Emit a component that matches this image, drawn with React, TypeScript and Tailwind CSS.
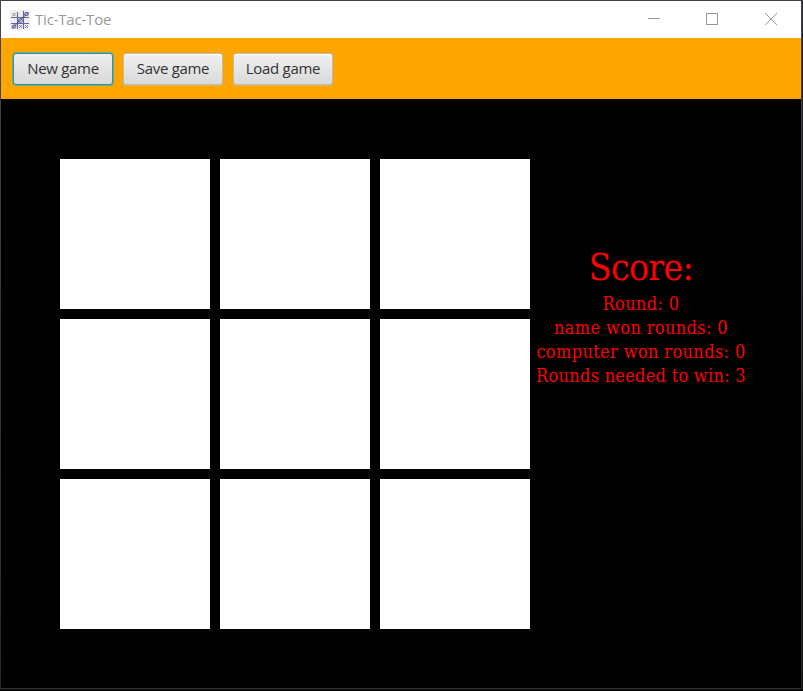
import React from "react";

const scoreLines = [
  { text: "Round: 0", style: "tracking-[0.35px]" },
  { text: "name won rounds: 0", style: "tracking-[0.37px]" },
  { text: "computer won rounds: 0", style: "tracking-[0.37px]" },
  { text: "Rounds needed to win: 3", style: "tracking-[0.28px]" },
];

function GameIcon() {
  return (
    <svg width="20" height="20" viewBox="0 0 20 20" fill="none" aria-hidden="true">
      <path fill="#eeeeea" d="M0 0h20v20H0z" />
      <path stroke="#6464a0" strokeWidth="1.1" d="M7.5 2v17M13.5 1v18M1 7.5h18M1 13.5h18" />
      <path stroke="#7070a0" strokeWidth="0.8" d="m2.5 3 3 3m0-3-3 3M9 15l3 3m0-3-3 3M15 15l3 3m0-3-3 3" />
      <g stroke="#44448c" strokeWidth="0.95">
        <ellipse cx="16.5" cy="4" rx="1.8" ry="1.6" />
        <ellipse cx="10.4" cy="10.5" rx="2" ry="1.8" />
        <ellipse cx="4" cy="16.5" rx="1.8" ry="1.6" />
        <path d="M2 18.5 18.5 2" />
      </g>
    </svg>
  );
}

function GameButton({ label, focused = false }: { label: string; focused?: boolean }) {
  return (
    <button
      className={
        "h-8 w-[100px] rounded-[3px] border bg-linear-to-b pb-[2px] text-[15px] leading-7 tracking-[-0.3px] text-[#333] " +
        (focused
          ? "border-[#039ed3] from-[#eeeeee] to-[#d9d9d9] shadow-[0_0_0_1px_#039ed366]"
          : "border-[#bababa] from-[#f0f0f0] to-[#dadada] shadow-[inset_0_1px_0_#ffffff,0_1px_0_#e3b65c]")
      }
    >
      {label}
    </button>
  );
}

export default function App() {
  return (
    <div className="flex h-[691px] w-[803px] flex-col overflow-hidden bg-[#080808] font-['Open_Sans','Noto_Sans',sans-serif]">
      <div className="h-px shrink-0 bg-[#403d47]" />
      <div className="flex h-[687px] shrink-0">
        <div className="w-px bg-linear-to-b from-[#46454c] to-[#292929]" />
        <main className="flex w-[800px] flex-col bg-black">
          <header className="flex h-[37px] shrink-0 items-center bg-white pl-[9px]">
            <GameIcon />
            <span className="-mt-px ml-[5px] text-[15px] leading-5 tracking-[-0.2px] text-[#999]">Tic-Tac-Toe</span>
            <svg className="-mt-px ml-auto mr-6" width="130" height="14" viewBox="0 0 130 14" fill="none" stroke="#999" shapeRendering="crispEdges" aria-hidden="true">
              <path d="M1 6.5h12M59.5 1.5h11v11h-11z" />
              <path d="m118 1 12 12m0-12-12 12" shapeRendering="auto" />
            </svg>
          </header>
          <nav className="flex h-[61px] shrink-0 gap-[10px] bg-[#ffa500] pl-3 pt-[15px]">
            <GameButton label="New game" focused />
            <GameButton label="Save game" />
            <GameButton label="Load game" />
          </nav>
          <section className="flex pl-[59px] pt-[60px]">
            <div className="grid grid-cols-[repeat(3,150px)] grid-rows-[repeat(3,150px)] gap-[10px]">
              {Array.from({ length: 9 }, (_, i) => (
                <div key={i} className="bg-white" />
              ))}
            </div>
            <aside className="flex w-[222px] flex-col items-center pt-[85px] font-['DejaVu_Serif_Condensed','DejaVu_Serif',serif] font-stretch-condensed text-[#ff0000]">
              <h1 className="h-[48px] whitespace-nowrap text-[37px] leading-[48px] tracking-[-0.65px]">Score:</h1>
              {scoreLines.map((line) => (
                <p key={line.text} className={"h-6 whitespace-nowrap text-[18px] leading-6 " + line.style}>
                  {line.text}
                </p>
              ))}
            </aside>
          </section>
        </main>
        <div className="w-px bg-linear-to-b from-[#46454c] to-[#292929]" />
        <div className="w-px bg-linear-to-b from-[#25252b] to-[#111]" />
      </div>
      <div className="h-px w-[802px] bg-[#303030]" />
    </div>
  );
}
